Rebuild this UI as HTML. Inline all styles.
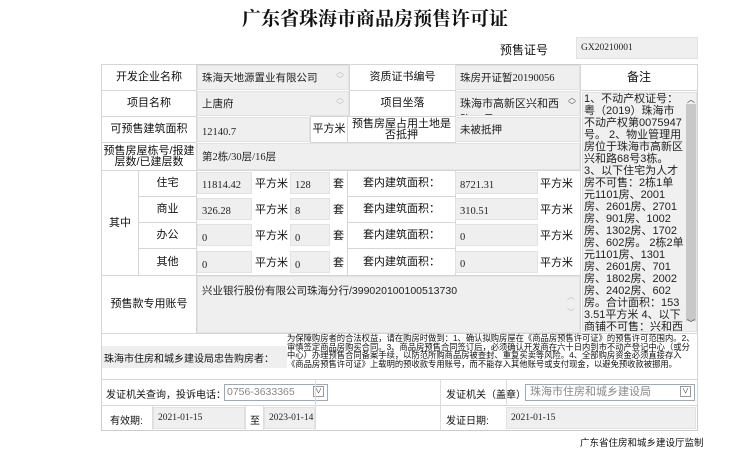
<!DOCTYPE html>
<html><head><meta charset="utf-8"><style>
body{margin:0;width:750px;height:450px;background:#fff;position:relative;overflow:hidden;font-family:"Liberation Sans","Noto Sans CJK SC",sans-serif;font-size:11px;color:#111}
.c{position:absolute;box-sizing:border-box;border:1px solid #d6d6d6;display:flex;align-items:center;justify-content:center;text-align:center;line-height:11px}
.v{position:absolute;box-sizing:border-box;background:#efefef;border:1px solid #e2e2e2;display:flex;align-items:center;padding-left:4px;font-family:"Liberation Serif","Noto Sans CJK SC",serif;font-size:10.5px;color:#222}
.t{position:absolute;font-size:11px}
.arr{position:absolute;color:#bbb;font-size:8px;line-height:8px}
</style></head><body>
<div class="t" style="left:0;width:750px;top:4px;text-align:center;font-size:19px;font-weight:bold;font-family:'Liberation Serif','Noto Serif CJK SC',serif">广东省珠海市商品房预售许可证</div>
<div class="t" style="left:500px;top:41px;font-size:12px">预售证号</div>
<div class="v" style="left:576px;top:37px;width:122px;height:22px;font-size:9.5px">GX20210001</div>

<div class="c" style="left:101px;top:64px;width:597px;height:367px;border-color:#ccc"></div>
<div class="c" style="left:101px;top:64px;width:96px;height:27px">开发企业名称</div>
<div class="v" style="left:197px;top:65px;width:152px;height:25px;align-items:flex-start;padding-top:4px">珠海天地源置业有限公司</div>
<div class="arr" style="left:336px;top:68px">︿<br>﹀</div>
<div class="c" style="left:349px;top:64px;width:107px;height:27px">资质证书编号</div>
<div class="v" style="left:455px;top:65px;width:125px;height:25px">珠房开证暂20190056</div>
<div class="c" style="left:580px;top:64px;width:118px;height:27px;font-size:12px">备注</div>
<div class="c" style="left:101px;top:90px;width:96px;height:27px">项目名称</div>
<div class="v" style="left:197px;top:91px;width:152px;height:25px;align-items:flex-start;padding-top:4px">上唐府</div>
<div class="arr" style="left:336px;top:94px">︿<br>﹀</div>
<div class="c" style="left:349px;top:90px;width:107px;height:27px">项目坐落</div>
<div class="v" style="left:455px;top:91px;width:125px;height:25px;align-items:flex-start;padding-top:3px;overflow:hidden;font-family:'Liberation Sans','Noto Sans CJK SC',sans-serif;font-size:11px;padding-right:14px">珠海市高新区兴和西路68号</div>
<div class="arr" style="left:568px;top:94px;color:#555">︿<br>﹀</div>
<div class="c" style="left:101px;top:116px;width:96px;height:27px">可预售建筑面积</div>
<div class="v" style="left:197px;top:117px;width:113px;height:25px;padding-top:6px">12140.7</div>
<div class="c" style="left:310px;top:116px;width:38px;height:27px">平方米</div>
<div class="c" style="left:347px;top:116px;width:109px;height:27px;line-height:11px">预售房屋占用土地是否抵押</div>
<div class="v" style="left:455px;top:117px;width:125px;height:25px;font-family:'Liberation Sans','Noto Sans CJK SC',sans-serif">未被抵押</div>
<div class="c" style="left:101px;top:142px;width:96px;height:29px;line-height:11px">预售房屋栋号/报建层数/已建层数</div>
<div class="v" style="left:197px;top:143px;width:383px;height:27px">第2栋/30层/16层</div>
<div class="c" style="left:101px;top:170px;width:38px;height:106px">其中</div>
<div class="c" style="left:138px;top:170px;width:59px;height:27px">住宅</div>
<div class="c" style="left:138px;top:196px;width:59px;height:27px">商业</div>
<div class="c" style="left:138px;top:222px;width:59px;height:27px">办公</div>
<div class="c" style="left:138px;top:248px;width:59px;height:28px">其他</div>
<div class="c" style="left:196px;top:170px;width:152px;height:106px"></div>
<div class="c" style="left:347px;top:170px;width:109px;height:27px">套内建筑面积：</div>
<div class="c" style="left:347px;top:196px;width:109px;height:27px">套内建筑面积：</div>
<div class="c" style="left:347px;top:222px;width:109px;height:27px">套内建筑面积：</div>
<div class="c" style="left:347px;top:248px;width:109px;height:28px">套内建筑面积：</div>
<div class="c" style="left:455px;top:170px;width:126px;height:106px"></div>

<div class="v" style="left:197px;top:172px;width:55px;height:22px;padding-top:4px">11814.42</div>
<div class="t" style="left:255px;top:175px">平方米</div>
<div class="v" style="left:290px;top:172px;width:40px;height:22px;padding-top:4px">128</div>
<div class="t" style="left:333px;top:175px">套</div>
<div class="v" style="left:455px;top:172px;width:83px;height:22px;padding-top:4px">8721.31</div>
<div class="t" style="left:540px;top:175px">平方米</div>
<div class="v" style="left:197px;top:198px;width:55px;height:22px;padding-top:4px">326.28</div>
<div class="t" style="left:255px;top:201px">平方米</div>
<div class="v" style="left:290px;top:198px;width:40px;height:22px;padding-top:4px">8</div>
<div class="t" style="left:333px;top:201px">套</div>
<div class="v" style="left:455px;top:198px;width:83px;height:22px;padding-top:4px">310.51</div>
<div class="t" style="left:540px;top:201px">平方米</div>
<div class="v" style="left:197px;top:224px;width:55px;height:22px;padding-top:6px">0</div>
<div class="t" style="left:255px;top:227px">平方米</div>
<div class="v" style="left:290px;top:224px;width:40px;height:22px;padding-top:6px">0</div>
<div class="t" style="left:333px;top:227px">套</div>
<div class="v" style="left:455px;top:224px;width:83px;height:22px;padding-top:4px">0</div>
<div class="t" style="left:540px;top:227px">平方米</div>
<div class="v" style="left:197px;top:251px;width:55px;height:22px;padding-top:6px">0</div>
<div class="t" style="left:255px;top:254px">平方米</div>
<div class="v" style="left:290px;top:251px;width:40px;height:22px;padding-top:6px">0</div>
<div class="t" style="left:333px;top:254px">套</div>
<div class="v" style="left:455px;top:251px;width:83px;height:22px;padding-top:4px">0</div>
<div class="t" style="left:540px;top:254px">平方米</div>

<div class="c" style="left:101px;top:275px;width:96px;height:59px">预售款专用账号</div>
<div class="v" style="left:197px;top:276px;width:383px;height:57px;align-items:flex-start;padding-top:6px;font-family:'Liberation Sans','Noto Sans CJK SC',sans-serif;font-size:10.5px">兴业银行股份有限公司珠海分行/399020100100513730</div>
<div class="arr" style="left:567px;top:293px">︿<br><br>﹀</div>

<div class="c" style="left:580px;top:90px;width:118px;height:244px"></div>
<div class="v" style="left:582px;top:92px;width:115px;height:240px;background:#f0f0f0;align-items:flex-start;padding:0 12px 0 1px;font-family:'Liberation Sans','Noto Sans CJK SC',sans-serif;font-size:11px;line-height:12px;overflow:hidden;word-break:break-all">1、不动产权证号：粤（2019）珠海市不动产权第0075947号。 2、物业管理用房位于珠海市高新区兴和路68号3栋。 3、以下住宅为人才房不可售：2栋1单元1101房、2001房、2601房、2701房、901房、1002房、1302房、1702房、602房。 2栋2单元1101房、1301房、2601房、701房、1802房、2002房、2402房、602房。合计面积：1533.51平方米 4、以下商铺不可售：兴和西路76号，合计面积：58.72平方米。</div>
<div style="position:absolute;left:686px;top:104px;width:10px;height:217px;background:#c8c8c8"></div>
<div class="arr" style="left:687px;top:96px;color:#333">︿</div>
<div class="arr" style="left:687px;top:320px;color:#333">﹀</div>

<div class="c" style="left:101px;top:333px;width:597px;height:47px"></div>
<div style="position:absolute;left:102px;top:346px;width:183px;height:22px;background:#efefef;display:flex;align-items:center;padding-left:2px;font-size:10px">珠海市住房和城乡建设局忠告购房者：</div>
<div style="position:absolute;left:287px;top:334px;width:408px;font-size:8.3px;line-height:8.5px;color:#111">为保障购房者的合法权益，请在购房时做到：1、确认拟购房屋在《商品房预售许可证》的预售许可范围内。2、审慎签定商品房购买合同。3、商品房预售合同签订后，必须确认开发商在六十日内到市不动产登记中心（或分中心）办理预售合同备案手续，以防范所购商品房被查封、重复买卖等风险。4、全部购房资金必须直接存入《商品房预售许可证》上载明的预收款专用账号，而不能存入其他账号或支付现金，以避免预收款被挪用。</div>

<div class="c" style="left:101px;top:379px;width:597px;height:27px"></div>
<div class="t" style="left:106px;top:386px;font-size:10px">发证机关查询，投诉电话：</div>
<div style="position:absolute;left:224px;top:384px;width:104px;height:17px;border:1px solid #9ab;box-sizing:border-box;font-size:10.5px;color:#888;padding-left:2px;line-height:15px">0756-3633365</div>
<div style="position:absolute;left:313px;top:386px;width:11px;height:11px;border:1px solid #999;box-sizing:border-box;font-size:7px;line-height:9px;text-align:center;color:#333">∨</div>
<div style="position:absolute;left:315px;top:379px;width:1px;height:52px;background:#ddd"></div>
<div class="t" style="left:446px;top:386px;font-size:10px">发证机关（盖章）</div>
<div style="position:absolute;left:525px;top:384px;width:170px;height:17px;border:1px solid #9ab;box-sizing:border-box;font-size:11px;color:#888;padding-left:4px;line-height:15px">珠海市住房和城乡建设局</div>
<div style="position:absolute;left:680px;top:386px;width:11px;height:11px;border:1px solid #999;box-sizing:border-box;font-size:7px;line-height:9px;text-align:center;color:#333">∨</div>
<div style="position:absolute;left:506px;top:379px;width:1px;height:27px;background:#ddd"></div>
<div style="position:absolute;left:440px;top:379px;width:1px;height:52px;background:#ddd"></div>

<div class="t" style="left:110px;top:412px;font-size:10px">有效期:</div>
<div style="position:absolute;left:152px;top:406px;width:1px;height:25px;background:#ddd"></div>
<div class="v" style="left:153px;top:407px;width:92px;height:22px;font-size:9.5px">2021-01-15</div>
<div style="position:absolute;left:245px;top:406px;width:1px;height:25px;background:#ddd"></div>
<div class="t" style="left:250px;top:412px;font-size:10px">至</div>
<div style="position:absolute;left:263px;top:406px;width:1px;height:25px;background:#ddd"></div>
<div class="v" style="left:264px;top:407px;width:51px;height:22px;font-size:9.5px;white-space:nowrap;overflow:visible">2023-01-14</div>
<div class="t" style="left:446px;top:412px;font-size:10px">发证日期:</div>
<div class="v" style="left:506px;top:407px;width:190px;height:22px;font-size:9.5px">2021-01-15</div>

<div class="t" style="left:580px;top:435px;font-size:9.5px">广东省住房和城乡建设厅监制</div>
</body></html>
